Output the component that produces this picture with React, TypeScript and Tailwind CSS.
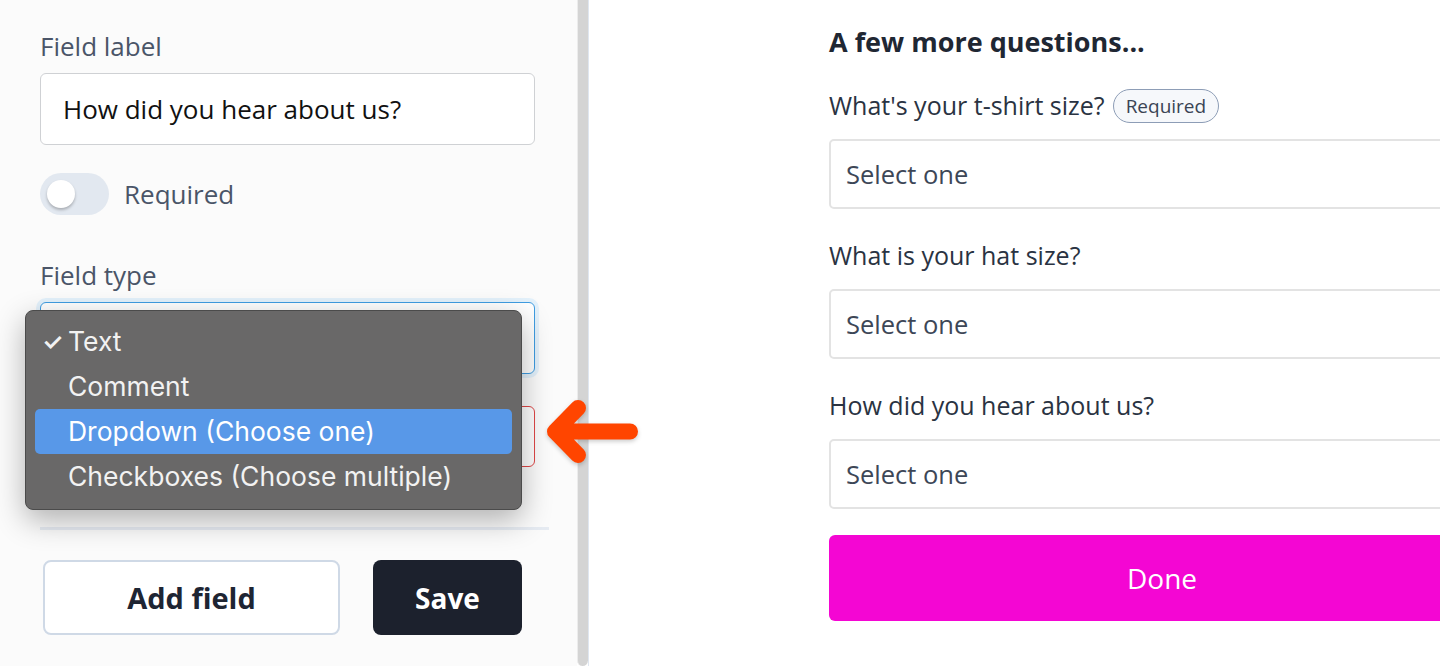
import React from "react"

const menuItems = ["Text", "Comment", "Dropdown (Choose one)", "Checkboxes (Choose multiple)"]

const questions = [
  { label: "What's your t-shirt size?", required: true },
  { label: "What is your hat size?", required: false },
  { label: "How did you hear about us?", required: false },
]

const App: React.FC = () => {
  return (
    <div className="relative flex h-[666px] w-[1440px] overflow-hidden bg-white font-['Open_Sans',sans-serif]">
      {/* Editor panel */}
      <div className="relative w-[577px] shrink-0 bg-[#fbfbfb] pt-[31px] pl-10">
        <p className="text-[26px] leading-[30px] text-[#4a5568]">Field label</p>
        <div className="mt-3 flex h-[72px] w-[495px] items-center rounded-md border border-[#cfd1d4] bg-white px-[22px] text-[26px] text-[#111]">
          How did you hear about us?
        </div>

        <div className="mt-7 flex items-center gap-[15px]">
          <div className="flex h-[42px] w-[69px] items-center rounded-full bg-[#e2e8f0] pl-[7px]">
            <div className="h-7 w-7 rounded-full bg-white shadow-[0_2px_3px_rgba(0,0,0,0.25)]" />
          </div>
          <span className="text-[26px] text-[#4a5568]">Required</span>
        </div>

        <p className="mt-[45px] text-[26px] leading-[30px] text-[#4a5568]">Field type</p>
        <div className="mt-3 h-[72px] w-[495px] rounded-md border border-[#3f9de2] bg-white shadow-[0_0_0_4px_#e3f1fb]" />
        <div className="mt-8 h-[61px] w-[495px] rounded-md border border-[#e04848] bg-white" />

        <div className="mt-[60px] h-[3px] w-[509px] bg-[#e6ebf2]" />

        <div className="mt-[30px] flex gap-[33px] pl-[3px]">
          <button className="h-[75px] w-[297px] rounded-lg border-2 border-[#cfd9e6] bg-white text-[29px] font-bold text-[#1e2533]">
            Add field
          </button>
          <button className="h-[75px] w-[149px] rounded-lg bg-[#1c212d] text-[28px] font-bold text-white">
            Save
          </button>
        </div>

        {/* Native select menu */}
        <div className="absolute top-[310px] left-[25px] w-[497px] rounded-lg border border-[#4b4b4b] bg-[#696868] pt-2 pb-[10px] font-['Inter',sans-serif] shadow-[0_10px_30px_rgba(0,0,0,0.3)]">
          {menuItems.map((item, i) => (
            <div
              key={item}
              className={`mx-[9px] flex h-[45px] items-center rounded-[5px] pl-[7px] text-[26.5px] text-[#f2f2f2] ${
                i === 2 ? "bg-[#5898e8] text-white" : ""
              }`}
            >
              <span className="w-[26px] text-[24px] font-semibold">{i === 0 ? "✓" : ""}</span>
              <span>{item}</span>
            </div>
          ))}
        </div>
      </div>

      {/* Scrollbar */}
      <div className="w-[11px] shrink-0 rounded-b-full border-l border-[#ececec] bg-[#d4d4d4]" />
      <div className="w-px shrink-0 bg-[#dfe6f0]" />

      {/* Preview panel */}
      <div className="flex-1 bg-white pt-[27px] pl-[240px]">
        <div className="w-[666px]">
          <h2 className="text-[27px] leading-[30px] font-bold text-[#1f2733]">A few more questions...</h2>
          {questions.map((q, i) => (
            <div key={q.label} className={i === 0 ? "mt-8" : "mt-[30px]"}>
              <div className="flex h-[34px] items-center gap-2">
                <span className="text-[25px] text-[#2a3342]">{q.label}</span>
                {q.required && (
                  <span className="flex h-[34px] items-center rounded-full border-[1.5px] border-[#8d9db6] bg-[#f6f8fb] px-3 text-[19px] text-[#3a4454]">
                    Required
                  </span>
                )}
              </div>
              <div className="mt-4 flex h-[70px] items-center rounded-[5px] border-2 border-[#e3e3e3] pl-[15px] text-[25.5px] text-[#3d4757]">
                Select one
              </div>
            </div>
          ))}
          <button className="mt-[26px] h-[86px] w-[666px] rounded-md bg-[#f406d3] text-[28px] text-white">Done</button>
        </div>
      </div>

      {/* Callout arrow */}
      <svg className="absolute top-[395px] left-[540px] drop-shadow-[0_2px_2px_rgba(0,0,0,0.2)]" width="104" height="74" viewBox="0 0 104 74">
        <path
          d="M90 36.5 H17 M38 13 L15 36.5 L38 60"
          fill="none"
          stroke="#ff4500"
          strokeWidth="16"
          strokeLinecap="round"
          strokeLinejoin="round"
        />
      </svg>
    </div>
  )
}

export default App
